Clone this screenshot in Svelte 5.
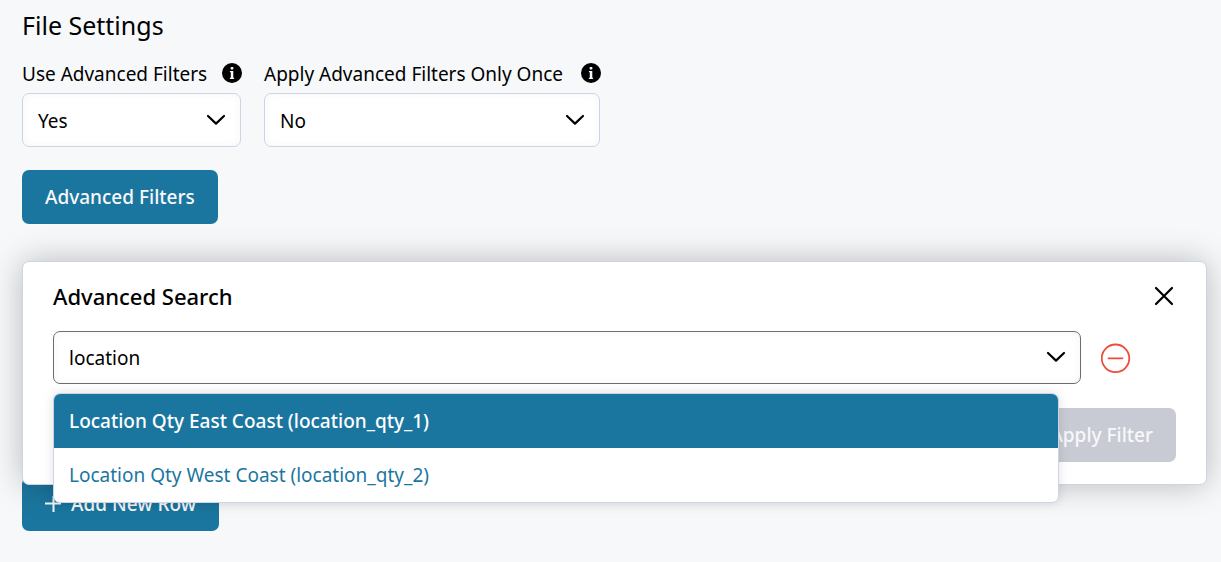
<script>
  let useFilters = $state('Yes');
  let applyOnce = $state('No');
  let query = $state('location');
  const options = [
    'Location Qty East Coast (location_qty_1)',
    'Location Qty West Coast (location_qty_2)'
  ];
  let active = $state(0);
</script>

{#snippet chevron()}
  <svg class="chevron" viewBox="0 0 20 12" width="20" height="12" aria-hidden="true">
    <path d="M2 2 L10 9.6 L18 2" />
  </svg>
{/snippet}

{#snippet info()}
  <svg class="info" viewBox="0 0 20 20" width="20" height="20" aria-hidden="true">
    <circle cx="10" cy="10" r="10" />
    <rect x="8.6" y="4" width="2.8" height="2.6" rx="0.8" />
    <path d="M7.9 8h3.4v6.8h.8V16H7.9v-1.2h.9V9.2h-.9z" />
  </svg>
{/snippet}

<main>
  <h1>File Settings</h1>

  <div class="settings">
    <div class="setting narrow">
      <div class="caption"><label for="use-filters">Use Advanced Filters</label>{@render info()}</div>
      <div class="control">
        <select id="use-filters" bind:value={useFilters}>
          <option>Yes</option>
          <option>No</option>
        </select>
        {@render chevron()}
      </div>
    </div>
    <div class="setting wide">
      <div class="caption"><label for="apply-once">Apply Advanced Filters Only Once</label>{@render info()}</div>
      <div class="control">
        <select id="apply-once" bind:value={applyOnce}>
          <option>Yes</option>
          <option>No</option>
        </select>
        {@render chevron()}
      </div>
    </div>
  </div>

  <button class="primary" type="button">Advanced Filters</button>

  <section class="panel" aria-labelledby="search-title">
    <header>
      <h2 id="search-title">Advanced Search</h2>
      <button class="icon" type="button" aria-label="Close">
        <svg class="close" viewBox="0 0 20 20" width="20" height="20"><path d="M2 2 L18 18 M18 2 L2 18" /></svg>
      </button>
    </header>
    <div class="row">
      <div class="control search">
        <input type="text" role="combobox" aria-labelledby="search-title" aria-expanded="true" aria-controls="matches" bind:value={query} />
        {@render chevron()}
        <ul id="matches" role="listbox">
          {#each options as option, i}
            <li role="option" aria-selected={i === active} class:active={i === active} onmouseenter={() => (active = i)}>{option}</li>
          {/each}
        </ul>
      </div>
      <button class="icon" type="button" aria-label="Remove">
        <svg class="remove" viewBox="0 0 30 30" width="30" height="30"><circle cx="14.5" cy="15.3" r="13.8" /><path d="M7.5 15.3h14" /></svg>
      </button>
    </div>
    <footer>
      <button class="primary" type="button" disabled>Apply Filter</button>
    </footer>
  </section>

  <button class="primary add" type="button">
    <svg viewBox="0 0 16 16" width="16" height="16" aria-hidden="true"><path d="M8.5 0v16M0 7.5h16" /></svg>
    Add New Row
  </button>
</main>

<style>
  :global(body) {
    background: #f7f8fa;
  }
  main {
    padding: 8px 14px 31px 22px;
    color: #000;
    font: 19px/28px "Noto Sans", sans-serif;
  }
  h1 {
    margin: 0 0 18px;
    font-size: 25px;
    font-weight: 400;
    line-height: 34px;
  }
  h2 {
    margin: 0;
    font-size: 22px;
    font-weight: 500;
    line-height: 30px;
  }
  button, select, input {
    font: inherit;
    color: inherit;
  }
  .settings {
    display: flex;
    flex-wrap: wrap;
    gap: 23px;
    margin-bottom: 23px;
  }
  .narrow { width: 219px; }
  .wide { width: 336px; }
  .caption {
    display: flex;
    align-items: center;
    justify-content: space-between;
    height: 28px;
    margin-bottom: 5px;
    white-space: nowrap;
  }
  .caption .info { margin: 0 -1px 2px 0; }
  .info { fill: #000; }
  .info rect, .info path { fill: #f7f8fa; }
  .control {
    position: relative;
    display: grid;
    align-items: center;
  }
  .control > select, .control > input, .control > .chevron {
    grid-area: 1 / 1;
  }
  select, input {
    appearance: none;
    width: 100%;
    height: 54px;
    box-sizing: border-box;
    margin: 0;
    padding: 0 48px 0 15px;
    border: 1px solid #cfd3e6;
    border-radius: 7px;
    background: #fff;
    box-shadow: inset 0 0 10px rgba(0, 0, 0, 0.04);
    outline: none;
  }
  select { padding-top: 2px; }
  .chevron {
    justify-self: end;
    margin: 0 15px 1px 0;
    pointer-events: none;
    fill: none;
    stroke: #000;
    stroke-width: 2.2;
    stroke-linecap: round;
    stroke-linejoin: round;
  }
  .primary {
    display: flex;
    align-items: center;
    gap: 10px;
    height: 54px;
    padding: 0 23px;
    border: 0;
    border-radius: 7px;
    background: #1b769f;
    color: #f7f8fa;
    font-weight: 500;
    cursor: pointer;
  }
  .primary:disabled {
    background: #c8cbd3;
    cursor: default;
  }
  .panel {
    position: relative;
    z-index: 1;
    margin-top: 37px;
    padding: 19px 30px 22px;
    border: 1px solid #cfd3e6;
    border-radius: 7px;
    background: #fff;
    box-shadow: 0 0 32px rgba(0, 0, 0, 0.25);
  }
  header {
    display: flex;
    align-items: center;
    justify-content: space-between;
    margin-bottom: 20px;
  }
  .icon {
    display: flex;
    padding: 0;
    border: 0;
    background: none;
    cursor: pointer;
  }
  header .icon { margin-right: 2px; }
  .icon svg {
    fill: none;
    stroke-linecap: round;
  }
  .close {
    stroke: #000;
    stroke-width: 2.2;
  }
  .remove {
    stroke: #ee4b3a;
    stroke-width: 1.8;
  }
  .row {
    display: flex;
    align-items: center;
    gap: 20px;
    padding-right: 45px;
  }
  .search { flex: 1; }
  .search input { border-color: #6b6d72; height: 53px; }
  ul {
    position: absolute;
    z-index: 2;
    top: calc(100% + 9px);
    left: 0;
    right: 22px;
    overflow: hidden;
    margin: 0;
    padding: 0;
    border: 1px solid #cfd3e6;
    border-radius: 7px;
    background: #fff;
    box-shadow: 0 0 12px rgba(0, 0, 0, 0.12);
    list-style: none;
  }
  li {
    padding: 13px 15px;
    color: #1b769f;
    cursor: pointer;
  }
  li.active {
    background: #1b769f;
    color: #fff;
    font-weight: 500;
  }
  footer {
    display: flex;
    justify-content: flex-end;
    margin-top: 24px;
  }
  .add { margin-top: -8px; }
  .add svg {
    fill: none;
    stroke: #f7f8fa;
    stroke-width: 2;
  }
</style>
